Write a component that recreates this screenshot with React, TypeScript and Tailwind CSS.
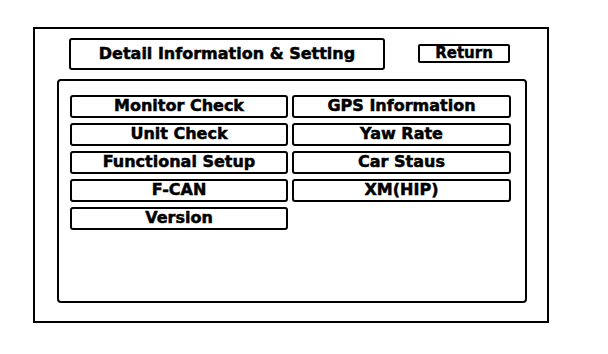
const left = ['Monitor Check', 'Unit Check', 'Functional Setup', 'F-CAN', 'Version'];
const right = ['GPS Information', 'Yaw Rate', 'Car Staus', 'XM(HIP)'];

function MenuButton({ label }: { label: string }) {
  return (
    <div className="h-[23px] border-2 border-black rounded-[3px] flex justify-center pt-[1px] text-[16px] leading-[16px] font-bold text-black [-webkit-text-stroke:0.5px_black]">
      {label}
    </div>
  );
}

export default function App() {
  return (
    <div className="w-[608px] h-[354px] bg-white pt-[27px] pl-[33px] font-['DejaVu_Sans',sans-serif]">
      <div className="w-[516px] h-[296px] border-2 border-black flex flex-col">
        <div className="flex items-start pl-[34px] pt-[9px] h-[50px]">
          <div className="w-[316px] h-[32px] border-2 border-black rounded-[3px] flex justify-center pt-[6px] text-[16px] leading-[16px] font-bold [-webkit-text-stroke:0.5px_black]">
            Detail Information &amp; Setting
          </div>
          <div className="ml-[33px] mt-[6px] w-[92px] h-[19px] border-2 border-black rounded-[2px] flex justify-center text-[15px] leading-[14px] font-bold [-webkit-text-stroke:0.4px_black]">
            Return
          </div>
        </div>
        <div className="ml-[22px] w-[470px] h-[224px] border-2 border-black rounded-[4px] pt-[14px] pl-[11px]">
          <div className="flex gap-[4px]">
            <div className="w-[218px] flex flex-col gap-[5px]">
              {left.map((l) => (
                <MenuButton key={l} label={l} />
              ))}
            </div>
            <div className="w-[219px] flex flex-col gap-[5px]">
              {right.map((r) => (
                <MenuButton key={r} label={r} />
              ))}
            </div>
          </div>
        </div>
      </div>
    </div>
  );
}
